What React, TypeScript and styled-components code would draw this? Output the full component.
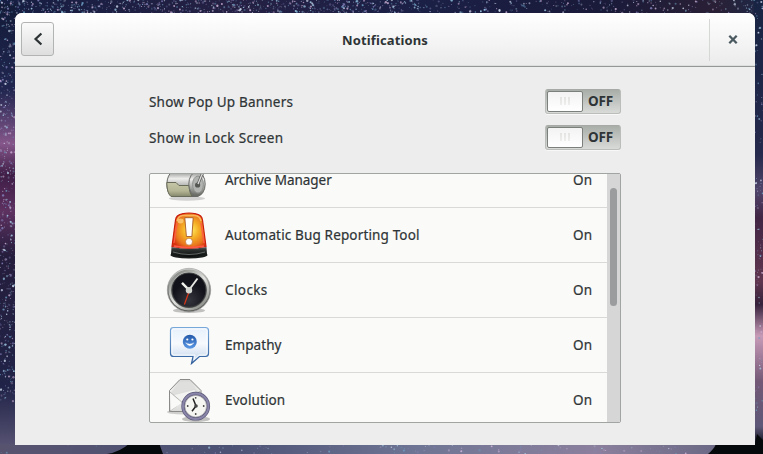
import React from 'react';
import styled, { createGlobalStyle } from 'styled-components';

const Global = createGlobalStyle`
  * { box-sizing: border-box; }
  body { margin: 0; overflow: hidden; font-family: "Noto Sans", "Open Sans", sans-serif; color: #2e3436; }
  button { font: inherit; color: inherit; padding: 0; }
  svg { display: block; }
`;

const Desktop = styled.main`
  position: relative;
  width: 763px;
  height: 454px;
  padding: 13px 8px 9px 15px;
  overflow: hidden;
  background: #171a36;
`;

const Wallpaper = styled.svg`
  position: absolute;
  inset: 0;
`;

const Window = styled.section`
  position: relative;
  display: flex;
  flex-direction: column;
  height: 432px;
  border-radius: 7px 7px 0 0;
  overflow: hidden;
  background: #ededed;
`;

const Shade = styled.div`
  border-radius: 7px 7px 0 0;
  box-shadow: 0 2px 8px 1px rgba(0, 0, 0, 0.7);
`;

const HeaderBar = styled.header`
  display: grid;
  grid-template-columns: 40px 1fr 46px;
  align-items: center;
  height: 54px;
  padding-left: 6px;
  flex: none;
  background: linear-gradient(#ffffff, #ebebeb);
  border-bottom: 1px solid #949796;
  box-shadow: inset 0 -1px #dcdfdc;
`;

const BackButton = styled.button`
  display: grid;
  place-items: center;
  width: 33px;
  height: 34px;
  margin-top: -1px;
  border: 1px solid #b1b4b2;
  border-radius: 3px;
  background: linear-gradient(#fafafa, #dedede);
`;

const Title = styled.h1`
  margin: 0;
  text-align: center;
  font-size: 13px;
  line-height: 20px;
  font-weight: 700;
  letter-spacing: 0.12px;
`;

const CloseButton = styled.button`
  display: grid;
  place-items: center;
  height: 42px;
  border: 0;
  border-left: 1px solid #d6d8d6;
  background: none;
`;

const Content = styled.div`
  width: 472px;
  margin: 17px 0 0 134px;
`;

const Setting = styled.div`
  display: flex;
  align-items: center;
  justify-content: space-between;
  height: 36px;
`;

const Label = styled.span<{ $track?: number }>`
  font-size: 13.5px;
  line-height: 20px;
  white-space: nowrap;
  letter-spacing: ${(p) => p.$track ?? 0}px;
  -webkit-text-stroke: 0.2px #2e3436;
`;

const Toggle = styled.button`
  display: flex;
  align-items: center;
  width: 76px;
  height: 25px;
  margin-bottom: 2px;
  padding: 0 1px;
  border: 1px solid #babdb9;
  border-top-color: #a5aaa6;
  border-radius: 3px;
  background: linear-gradient(#a9aea9, #d9dbd8);
  box-shadow: 0 1px #f8f8f8;
`;

const Knob = styled.span`
  display: flex;
  align-items: center;
  justify-content: center;
  gap: 2px;
  width: 36px;
  height: 21px;
  border: 1px solid #7b807d;
  border-radius: 2px;
  background: linear-gradient(#f2f3f2, #ffffff);
`;

const Grip = styled.i`
  width: 2px;
  height: 8px;
  background: linear-gradient(#e3e4e1, #eeefed);
`;

const State = styled.span`
  flex: 1;
  padding-right: 1px;
  text-align: center;
  font-size: 13.5px;
  line-height: 20px;
  font-weight: 700;
  letter-spacing: -0.1px;
`;

const ListFrame = styled.div`
  display: flex;
  height: 250px;
  margin-top: 17px;
  border: 1px solid #a1a5a2;
  border-radius: 2px;
  overflow: hidden;
  background: #fafaf8;
`;

const Rows = styled.ul`
  flex: 1;
  margin: -21px 0 0;
  padding: 0;
  list-style: none;
`;

const Row = styled.li`
  display: grid;
  grid-template-columns: 48px 1fr auto;
  column-gap: 12px;
  align-items: center;
  height: 55px;
  padding: 0 15px;
  border-bottom: 1px solid #d8dad7;
`;

const ScrollTrack = styled.div`
  width: 13px;
  padding: 14px 3px;
  background: #d6d6d6;
`;

const ScrollThumb = styled.div`
  height: 118px;
  width: 7px;
  border-radius: 4px;
  background: #9a9c9d;
`;

function makeStars() {
  let seed = 4217;
  const next = () => {
    seed = (seed * 16807) % 2147483647;
    return seed / 2147483647;
  };
  const stars: { x: number; y: number; r: number; o: number; c: string }[] = [];
  const tones = ['#a9d6ee', '#d7e4f5', '#d5b8dc', '#6d9fc4', '#8582bd'];
  const fill = (n: number, x: number, y: number, w: number, h: number) => {
    for (let i = 0; i < n; i++) {
      const bright = next();
      stars.push({
        x: x + next() * w,
        y: y + next() * h,
        r: 0.45 + bright * bright * 0.75,
        o: 0.2 + next() * 0.65,
        c: tones[Math.floor(next() * tones.length)],
      });
    }
  };
  fill(680, 0, 0, 420, 13);
  fill(240, 420, 0, 343, 13);
  fill(480, 0, 13, 15, 390);
  fill(90, 755, 13, 8, 400);
  fill(90, 160, 445, 560, 9);
  fill(12, 0, 420, 160, 34);
  return stars;
}

const stars = makeStars();

const Sky = () => (
  <Wallpaper width="763" height="454" viewBox="0 0 763 454" aria-hidden="true">
    <defs>
      <linearGradient id="skyTop">
        <stop offset="0" stopColor="#151e42" />
        <stop offset=".3" stopColor="#242043" />
        <stop offset=".55" stopColor="#1b2046" />
        <stop offset=".8" stopColor="#1a1a39" />
        <stop offset=".94" stopColor="#2a2036" />
        <stop offset="1" stopColor="#1d2847" />
      </linearGradient>
      <linearGradient id="skyLeft" x2="0" y2="1">
        <stop offset="0" stopColor="#131b39" />
        <stop offset=".19" stopColor="#20264f" />
        <stop offset=".31" stopColor="#85568a" />
        <stop offset=".38" stopColor="#3f1e46" />
        <stop offset=".46" stopColor="#5d3160" />
        <stop offset=".56" stopColor="#251d3c" />
        <stop offset=".85" stopColor="#202347" />
        <stop offset="1" stopColor="#5d5878" />
      </linearGradient>
      <linearGradient id="skyRight" x2="0" y2="1">
        <stop offset="0" stopColor="#182443" />
        <stop offset=".34" stopColor="#25294b" />
        <stop offset=".42" stopColor="#51456b" />
        <stop offset=".48" stopColor="#412544" />
        <stop offset=".62" stopColor="#60364f" />
        <stop offset=".67" stopColor="#34203a" />
        <stop offset=".74" stopColor="#c79bb8" />
        <stop offset=".84" stopColor="#735876" />
        <stop offset=".94" stopColor="#5d5777" />
        <stop offset=".98" stopColor="#080d16" />
      </linearGradient>
      <linearGradient id="skyBottom">
        <stop offset="0" stopColor="#57536f" />
        <stop offset=".3" stopColor="#4c5274" />
        <stop offset=".55" stopColor="#6f7594" />
        <stop offset=".78" stopColor="#8b809d" />
        <stop offset="1" stopColor="#5e607c" />
      </linearGradient>
    </defs>
    <rect width="763" height="14" fill="url(#skyTop)" />
    <rect y="4" width="16" height="450" fill="url(#skyLeft)" />
    <rect x="754" width="9" height="454" fill="url(#skyRight)" />
    <rect y="444" width="763" height="10" fill="url(#skyBottom)" />
    {stars.map((s, i) => (
      <circle key={i} cx={s.x} cy={s.y} r={s.r} fill={s.c} opacity={s.o} />
    ))}
    <path d="M107 454Q120 452 130 443H159L163 454ZM708 454Q714 449 716 444H755L757 434 763 440V454Z" fill="#05090c" />
  </Wallpaper>
);

const ArchiveIcon = () => (
  <svg width="48" height="48" viewBox="0 0 48 48">
    <defs>
      <linearGradient id="metal" x2="0" y2="1">
        <stop stopColor="#8b8d89" /><stop offset=".3" stopColor="#eeeeec" /><stop offset=".65" stopColor="#a4a6a2" /><stop offset="1" stopColor="#60625e" />
      </linearGradient>
      <linearGradient id="folder" x2="0" y2="1">
        <stop stopColor="#c6c7a8" /><stop offset=".6" stopColor="#b3b594" /><stop offset="1" stopColor="#85876c" />
      </linearGradient>
    </defs>
    <ellipse cx="22" cy="42.5" rx="18" ry="2.2" fill="#bbb" opacity=".65" />
    <path d="M8 15H33C41 18 42 37 32 40.5H7C0 37 0 19 8 15Z" fill="url(#metal)" stroke="#666864" />
    <path d="M1.8 26.5H11L14 29.5H24Q24 36 27 40.5H6C3 38 2 33 1.8 26.5Z" fill="url(#folder)" stroke="#686b59" />
    <ellipse cx="32" cy="28" rx="8.2" ry="12.3" fill="url(#metal)" stroke="#6c6e6a" />
    <ellipse cx="33" cy="28.5" rx="5.4" ry="8.5" fill="#b1b3b0" stroke="#90928f" />
    <circle cx="32.6" cy="29" r="2.6" fill="#555753" />
    <path d="M33 28L36.5 19.5L40.5 12" fill="none" stroke="#5d5f5b" strokeWidth="2.8" />
    <path d="M33 28L36.5 19.5L40.5 12" fill="none" stroke="#ddd" strokeWidth="1.3" />
  </svg>
);

const SirenIcon = () => (
  <svg width="48" height="48" viewBox="0 0 48 48">
    <defs>
      <radialGradient id="glow" cx=".55" cy=".48" r=".6">
        <stop stopColor="#ffef63" /><stop offset=".4" stopColor="#f5ae25" /><stop offset=".75" stopColor="#e9771e" /><stop offset="1" stopColor="#d6330f" />
      </radialGradient>
      <linearGradient id="base" x2="0" y2="1">
        <stop stopColor="#5d6261" /><stop offset=".3" stopColor="#2b302f" /><stop offset="1" stopColor="#080b0a" />
      </linearGradient>
    </defs>
    <ellipse cx="24" cy="44" rx="18.5" ry="3.4" fill="#191d1c" />
    <path d="M6.5 36Q24 39 41.5 36L42 43Q24 49 6 43Z" fill="url(#base)" />
    <path d="M8 41Q24 46 40 41" stroke="#737776" strokeWidth=".8" fill="none" />
    <path d="M7 35.5L10.5 9Q11 4 17 2.8Q24 1.2 31 2.8Q37 4 37.5 9L41 35.5Q24 39 7 35.5Z" fill="url(#glow)" stroke="#c91c0c" strokeWidth="1.2" />
    <path d="M12 10Q13 5 18 4.5H30Q35 5 36 10" fill="none" stroke="#ffc36c" strokeWidth="1.6" opacity=".8" />
    <ellipse cx="15.5" cy="10" rx="3" ry="2.4" fill="#ffe093" opacity=".65" />
    <path d="M9 32L12 12M39 32L36 12M9 35Q24 38 39 35" stroke="#ff5b45" strokeWidth="1.3" fill="none" />
    <path d="M19.8 6.7H28.2L26.9 25.5H21.4Z" fill="#fff" stroke="#a85a24" strokeWidth=".9" />
    <circle cx="24" cy="30.7" r="3.5" fill="#fff" stroke="#b95b22" strokeWidth=".6" />
  </svg>
);

const ClockIcon = () => (
  <svg width="48" height="48" viewBox="0 0 48 48">
    <defs>
      <linearGradient id="rim" x2="0" y2="1">
        <stop stopColor="#d7d9d5" /><stop offset=".45" stopColor="#7c7f7b" /><stop offset="1" stopColor="#555753" />
      </linearGradient>
      <linearGradient id="rimInner" x2=".8" y2="1">
        <stop stopColor="#70736f" /><stop offset=".55" stopColor="#e3e4e1" /><stop offset="1" stopColor="#8b8d89" />
      </linearGradient>
      <radialGradient id="face" cy=".8"><stop stopColor="#35353e" /><stop offset="1" stopColor="#11121a" /></radialGradient>
    </defs>
    <ellipse cx="24" cy="44.5" rx="16" ry="2.6" fill="#999" opacity=".6" />
    <circle cx="24" cy="24" r="21.7" fill="url(#rim)" stroke="#949693" strokeWidth=".6" />
    <circle cx="24" cy="24" r="19.2" fill="none" stroke="url(#rimInner)" strokeWidth="2.4" />
    <circle cx="24" cy="24" r="17" fill="url(#face)" stroke="#373a3b" />
    <path d="M24.3 25L19.4 38.5" stroke="#dc3617" strokeWidth="1.2" />
    <path d="M24 24L17 16.8" stroke="#f3f3ee" strokeWidth="2.4" />
    <path d="M24 24L32.5 12.5" stroke="#e8e8e4" strokeWidth="1.9" />
    <circle cx="24" cy="24.3" r="3.2" fill="#d3d5d1" />
  </svg>
);

const EmpathyIcon = () => (
  <svg width="48" height="48" viewBox="0 0 48 48">
    <defs>
      <linearGradient id="bubble" x2="0" y2="1"><stop stopColor="#e6f0fc" /><stop offset=".45" stopColor="#f7fafd" /><stop offset="1" stopColor="#bfd2ea" /></linearGradient>
      <linearGradient id="bubbleEdge" x2="0" y2="1"><stop stopColor="#78a8da" /><stop offset="1" stopColor="#2e5c9a" /></linearGradient>
      <linearGradient id="smile" x2="0" y2="1"><stop stopColor="#245aaa" /><stop offset="1" stopColor="#5b99e5" /></linearGradient>
    </defs>
    <path d="M8.5 6.5H40.5Q43.5 6.5 43.5 9.5V32.5Q43.5 35.5 40.5 35.5H34.5L26.5 42.5L28 35.5H8.5Q5.5 35.5 5.5 32.5V9.5Q5.5 6.5 8.5 6.5Z" fill="url(#bubble)" stroke="url(#bubbleEdge)" strokeWidth="1.2" />
    <path d="M7 10Q7 8 9 8H40Q42 8 42 10V32Q42 34 40 34H34L29 38.5L30 34H9Q7 34 7 32Z" fill="none" stroke="#fff" opacity=".75" />
    <circle cx="24.8" cy="20.8" r="7" fill="url(#smile)" />
    <circle cx="22.3" cy="18.5" r="1.1" fill="#fff" /><circle cx="27.4" cy="18.5" r="1.1" fill="#fff" />
    <path d="M20.6 21.8Q24.8 27.5 29 21.8Q24.8 24.2 20.6 21.8Z" fill="#fff" stroke="#fff" strokeWidth=".3" />
  </svg>
);

const EvolutionIcon = () => (
  <svg width="48" height="48" viewBox="0 0 48 48">
    <defs>
      <linearGradient id="paper" x2="0" y2="1"><stop stopColor="#d7d8d5" /><stop offset=".5" stopColor="#f7f7f5" /><stop offset="1" stopColor="#d9dad7" /></linearGradient>
    </defs>
    <ellipse cx="18" cy="36" rx="16" ry="2.6" fill="#999" opacity=".45" />
    <path d="M4.5 14.5L15 3.5H25L36 14.5V35.5H4.5Z" fill="url(#paper)" stroke="#898b88" />
    <path d="M6 16L15.5 6H24.5L34 16V19L9 20Z" fill="#dfe0dd" />
    <path d="M8 19L30 13.5 33 24 20 33Z" fill="#f3f3f1" stroke="#d5d6d3" strokeWidth=".6" />
    <path d="M5 16L19 28L35 15M5 35L17 26M35 35L21 26" fill="none" stroke="#b5b7b3" />
    <path d="M6 18L17 27L6 34Z" fill="#f9f9f8" />
    <ellipse cx="31" cy="43" rx="14" ry="3" fill="#888" opacity=".5" />
    <circle cx="30.7" cy="30.2" r="12.6" fill="#f5f5f1" stroke="#5d5a7a" strokeWidth="3.6" />
    <circle cx="30.7" cy="30.2" r="12.7" fill="none" stroke="#8885a9" strokeWidth="2" />
    <circle cx="30.7" cy="30.2" r="10.8" fill="none" stroke="#aaa9af" strokeWidth=".7" />
    <path d="M31 30L28 22.5M31 30L27 35.2" stroke="#222" strokeWidth="1.5" />
    <g fill="#454747"><circle cx="30.7" cy="21.8" r=".9" /><circle cx="38.7" cy="30" r=".9" /><circle cx="30.7" cy="38" r=".9" /><circle cx="22.7" cy="30" r=".9" /><circle cx="31" cy="30" r="1.8" /></g>
  </svg>
);

const apps = [
  { name: 'Archive Manager', Icon: ArchiveIcon, track: -0.05 },
  { name: 'Automatic Bug Reporting Tool', Icon: SirenIcon, track: 0.15 },
  { name: 'Clocks', Icon: ClockIcon, track: 0.4 },
  { name: 'Empathy', Icon: EmpathyIcon, track: 0.05 },
  { name: 'Evolution', Icon: EvolutionIcon, track: 0.12 },
];

const settings = [
  { name: 'Show Pop Up Banners', track: 0.2 },
  { name: 'Show in Lock Screen', track: 0.32 },
];

export default function App() {
  return (
    <>
      <Global />
      <Desktop>
        <Sky />
        <Shade>
          <Window>
            <HeaderBar>
              <BackButton aria-label="Back">
                <svg width="10" height="14" viewBox="0 0 10 14"><path d="M8.4 1.5L2.6 7L8.4 12.5" fill="none" stroke="#2e3436" strokeWidth="2.3" /></svg>
              </BackButton>
              <Title>Notifications</Title>
              <CloseButton aria-label="Close">
                <svg width="10" height="10" viewBox="0 0 10 10"><path d="M1.3 .8L8.7 8.2M8.7 .8L1.3 8.2" stroke="#4b5a60" strokeWidth="2.3" /></svg>
              </CloseButton>
            </HeaderBar>
            <Content>
              {settings.map((s) => (
                <Setting key={s.name}>
                  <Label $track={s.track}>{s.name}</Label>
                  <Toggle role="switch" aria-checked={false}>
                    <Knob><Grip /><Grip /><Grip /></Knob>
                    <State>OFF</State>
                  </Toggle>
                </Setting>
              ))}
              <ListFrame>
                <Rows>
                  {apps.map(({ name, Icon, track }) => (
                    <Row key={name}>
                      <Icon />
                      <Label $track={track}>{name}</Label>
                      <Label>On</Label>
                    </Row>
                  ))}
                </Rows>
                <ScrollTrack><ScrollThumb /></ScrollTrack>
              </ListFrame>
            </Content>
          </Window>
        </Shade>
      </Desktop>
    </>
  );
}
